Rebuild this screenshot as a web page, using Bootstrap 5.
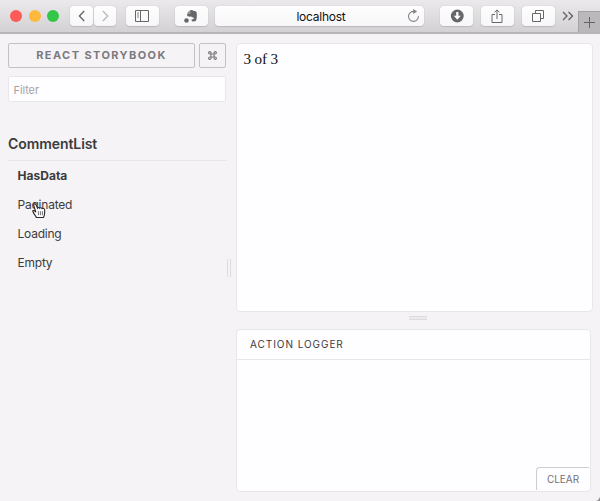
<!DOCTYPE html>
<html lang="en">
<head>
<meta charset="utf-8">
<meta name="viewport" content="width=device-width, initial-scale=1">
<title>React Storybook</title>
<link href="https://cdn.jsdelivr.net/npm/bootstrap@5.3.0/dist/css/bootstrap.min.css" rel="stylesheet">
<script src="https://cdn.jsdelivr.net/npm/bootstrap@5.3.0/dist/js/bootstrap.bundle.min.js" defer></script>
<style>
body{width:600px;height:501px;overflow:hidden;background:#f5f3f6;font-family:Inter,"Liberation Sans",sans-serif;color:#3b3b3d}
svg{display:block;flex:none}
.toolbar{height:34px;background:linear-gradient(#ebe9ec,#d3d1d4);border-bottom:2px solid #b7b4b8;padding-left:10.4px}
.lights{gap:6.2px}
.history{gap:1px;margin-left:11.6px}
.light{width:12px;height:12px}
.light-red{background:#fc5b57}.light-yellow{background:#fdb93d}.light-green{background:#33c748}
.tool{height:20px;width:33.5px;border-radius:4px;background:linear-gradient(#fefefe,#f7f6f8);box-shadow:0 0 1px #aaa,0 1px 1px #bdbbbf;color:#68666a}
.tool-nav{width:22.5px}
.tool-off{color:#bdbbbf}
.gap-near{margin-left:7.4px}
.gap-panel{margin-left:9.3px}
.gap-wide{margin-left:15.4px}
.address{width:209px;color:#111;font-size:12px;letter-spacing:-.25px;line-height:21px;padding-left:2px}
.more{margin-left:6.5px}
.new-tab{width:22px;height:21px;background:#bab8bb;border:1px solid #a3a1a4;border-right:0;border-bottom:0;color:#656366}
.reload{right:4px;top:3px}
.sidebar{width:218px;margin-left:8px;padding-top:9px}
.brand{height:25px;border:1px solid #c3c1c5;border-radius:2px;color:#7c7a7e;font-weight:700;font-size:11px;letter-spacing:1.4px;line-height:23px}
.brand-name{width:187px}
.shortcut{width:27px}
.filter{height:26px;border:1px solid #e9e7eb;border-radius:2px;background:#fefdff;font-size:11px;letter-spacing:-.1px;padding:1px 5px 0 4.5px;color:#3b3b3d;margin-top:8px}
.filter::placeholder{color:#a5a3a7;opacity:1}
.kind{margin-top:31px;height:28px;font-size:14px;line-height:21px;letter-spacing:-.08px;font-weight:600;border-bottom:1px solid #e8e6e9;width:219px}
.story{height:29.1px;line-height:30px;font-size:12px;letter-spacing:-.22px;padding-left:9.5px}
.story-active{letter-spacing:.02px}
.pane{background:#fefdff;border:1px solid #e8e6ea;border-radius:4px}
.grip-v{width:4px;height:18px;border:solid #dddbdf;border-width:0 1px;margin:225px 5px 0 1px}
.grip-h{width:18px;height:4px;border:solid #dddbdf;border-width:1px 0;background:#eceaee;margin:4px 0 9px 172.5px}
.panes{padding-top:9px}
.preview{width:357px;height:269px;font:15.2px/19px "Liberation Serif",serif;letter-spacing:-.15px;color:#111;padding:5px 6.5px}
.logger{width:355px;height:163px}
.logger-title{height:30px;border-bottom:1px solid #e8e6ea;font-size:10px;letter-spacing:.95px;line-height:29px;padding-left:13px}
.clear{width:53px;height:23px;font-size:10px;line-height:22px;letter-spacing:-.05px;color:#747276;background:#fefdff;border:1px solid #ceccd0;border-width:1px 0 0 1px;border-radius:4px 0 0 0;padding:0;margin:0 1px 1px 0}
.pointer{left:32px;top:202px}
.corner{right:0;bottom:0}
</style>
</head>
<body class="position-relative">
<header class="toolbar d-flex align-items-center">
  <div class="lights d-flex">
    <span class="light light-red rounded-circle"></span>
    <span class="light light-yellow rounded-circle"></span>
    <span class="light light-green rounded-circle"></span>
  </div>
  <div class="history d-flex">
    <div class="tool tool-nav d-flex align-items-center justify-content-center"><svg width="8" height="12" viewBox="0 0 8 12" fill="none" stroke="currentColor" stroke-width="1.4"><path d="M6.2 1 1.4 6l4.8 5"/></svg></div>
    <div class="tool tool-nav tool-off d-flex align-items-center justify-content-center"><svg width="8" height="12" viewBox="0 0 8 12" fill="none" stroke="currentColor" stroke-width="1.4"><path d="m1.9 1 4.8 5-4.8 5"/></svg></div>
  </div>
  <div class="tool gap-panel d-flex align-items-center justify-content-center"><svg width="14" height="12" viewBox="0 0 14 12" fill="none" stroke="currentColor"><path d="M.5.5h13v11H.5zM5.5.5v11"/><path d="M2 3h2M2 5h2M2 7h2" stroke-width=".8"/></svg></div>
  <div class="tool gap-wide d-flex align-items-center justify-content-center"><svg width="14" height="14" viewBox="0 0 14 14" fill="currentColor"><circle cx="2.5" cy="11.5" r="2.3"/><path d="M6 1.2 3.2 4.2v2.6c.8 1 2.5.9 4 .7.3.8 1.5 1 2.5 1v1.7H8.3c-.7 0-.9.5-.8 1.1.2.9 1 1.3 2.3 1.3 2 0 2.6-1 2.9-4 .2-2 .2-4-.2-5.5-.3-.8-1.4-1.1-3-1.2C8.8.9 7.5.8 6 1.2Z"/><path d="M6 1.2v3H3.2" stroke="#f9f8fa" stroke-width=".5" fill="none"/></svg></div>
  <div class="tool address gap-near position-relative text-center">localhost<svg class="reload position-absolute" width="13" height="14" viewBox="0 0 13 14" fill="none" stroke="#858387" stroke-width="1.1"><path d="M7 2.4a5 5 0 1 0 4.5 4.9"/><path d="m6.2 0 4 2.6-4 2.5z" fill="#858387" stroke="none"/></svg></div>
  <div class="tool gap-wide d-flex align-items-center justify-content-center"><svg width="14" height="14" viewBox="0 0 14 14"><circle cx="7.3" cy="7" r="6.4" fill="#68666a"/><path d="M6.2 3h2.2v3.7h2.4l-3.5 4-3.5-4h2.4z" fill="#fff"/></svg></div>
  <div class="tool gap-near d-flex align-items-center justify-content-center"><svg width="12" height="15" viewBox="0 0 12 15" fill="none" stroke="currentColor"><path d="M4 5.5H1v8h10v-8H8M6 10V1M3.5 3.4 6 .9l2.5 2.5"/></svg></div>
  <div class="tool gap-near d-flex align-items-center justify-content-center"><svg width="12" height="12" viewBox="0 0 12 12" fill="none" stroke="currentColor"><path d="M.5 3.5h8v8h-8zM3.5 3.5v-3h8v8h-3"/></svg></div>
  <svg class="more" width="12" height="10" viewBox="0 0 12 10" fill="none" stroke="#626064" stroke-width="1.3"><path d="m1 1 4 4-4 4M6.5 1l4 4-4 4"/></svg>
  <div class="new-tab d-flex align-items-center justify-content-center ms-auto align-self-end"><svg width="11" height="11" viewBox="0 0 11 11" stroke="currentColor"><path d="M5.5 0v11M0 5.5h11"/></svg></div>
</header>
<main class="d-flex">
  <aside class="sidebar">
    <div class="d-flex justify-content-between">
      <div class="brand brand-name text-center">REACT STORYBOOK</div>
      <div class="brand shortcut d-flex align-items-center justify-content-center"><svg width="9" height="9" viewBox="0 0 10 10" fill="none" stroke="#7c7a7e" stroke-width="1.3"><path d="M3.3 3.3h3.4v3.4H3.3zM3.3 3.3H2.1A1.3 1.3 0 1 1 3.3 2zM6.7 3.3V2.1a1.3 1.3 0 1 1 1.2 1.2zM6.7 6.7h1.2a1.3 1.3 0 1 1-1.2 1.2zM3.3 6.7v1.2a1.3 1.3 0 1 1-1.2-1.2z"/></svg></div>
    </div>
    <input class="filter d-block w-100" type="text" placeholder="Filter" aria-label="Filter">
    <h1 class="kind mb-0">CommentList</h1>
    <ul class="list-unstyled mb-0">
      <li class="story story-active fw-bold">HasData</li>
      <li class="story">Paginated</li>
      <li class="story">Loading</li>
      <li class="story">Empty</li>
    </ul>
  </aside>
  <div class="grip-v"></div>
  <div class="panes">
    <section class="pane preview">3 of 3</section>
    <div class="grip-h"></div>
    <section class="pane logger d-flex flex-column">
      <div class="logger-title">ACTION LOGGER</div>
      <button class="clear mt-auto align-self-end" type="button">CLEAR</button>
    </section>
  </div>
</main>
<svg class="pointer position-absolute" width="15" height="17" viewBox="0 0 15 17"><path d="M4.4 15.5C3.7 13.6 1.8 12 1 9.8c-.5-1.3.8-1.8 1.8-.7l1 1L1.8 3.6C1.3 1.9 3.2 1 4 2.7l1.6 3.5c.5-1 1.8-.9 2.2 0 .7-.8 2-.6 2.3.4 1-.7 2.4 0 2.5 1.2.3 2.8.2 4.8-1.1 7.7Z" fill="#fff" stroke="#29272b" stroke-width="1.1"/><path d="M6.4 9.2v4M8.4 9.2v4M10.4 9.2v4" stroke="#4d4b4f" stroke-width=".8"/></svg>
<svg class="corner position-absolute" width="4" height="4" viewBox="0 0 4 4"><path d="M4 0v4H0Q3 3 4 0" fill="#8f8d91"/></svg>
</body>
</html>
